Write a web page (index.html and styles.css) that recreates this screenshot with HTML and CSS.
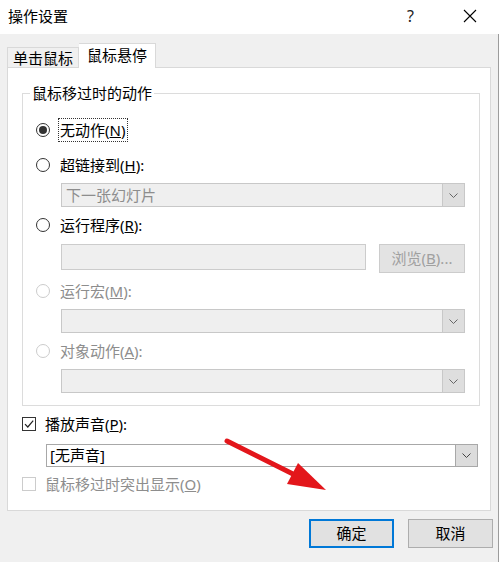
FILE: index.html
```html
<!DOCTYPE html>
<html lang="zh-CN">
<head>
    <meta charset="UTF-8">
    <title>操作设置</title>
    <link rel="stylesheet" href="styles.css">
</head>
<body>
    <div class="window">
        <div class="titlebar">
            <span class="title">操作设置</span>
            <span class="help">?</span>
            <svg class="close" width="14" height="14" viewBox="0 0 14 14"><path d="M1 1L13 13M13 1L1 13" stroke="#000" stroke-width="1.1"/></svg>
        </div>
        <div class="client">
            <div class="tabs">
                <div class="tab">单击鼠标</div>
                <div class="tab active">鼠标悬停</div>
            </div>
            <div class="panel">
                <fieldset class="group">
                    <legend>鼠标移过时的动作</legend>
                    <div class="opt first"><span class="radio checked"></span><span class="focus">无动作(<u>N</u>)</span></div>
                    <div class="opt"><span class="radio"></span><span>超链接到(<u>H</u>):</span></div>
                    <div class="combo sub off">
                        <span class="value">下一张幻灯片</span>
                        <span class="drop"><svg width="9" height="5" viewBox="0 0 9 5"><path d="M0.5 0.5L4.5 4.5L8.5 0.5" fill="none" stroke="#666"/></svg></span>
                    </div>
                    <div class="opt"><span class="radio"></span><span>运行程序(<u>R</u>):</span></div>
                    <div class="sub program">
                        <div class="field"></div>
                        <div class="browse">浏览(<u>B</u>)...</div>
                    </div>
                    <div class="opt off"><span class="radio"></span><span>运行宏(<u>M</u>):</span></div>
                    <div class="combo sub off">
                        <span class="value"></span>
                        <span class="drop"><svg width="9" height="5" viewBox="0 0 9 5"><path d="M0.5 0.5L4.5 4.5L8.5 0.5" fill="none" stroke="#666"/></svg></span>
                    </div>
                    <div class="opt off"><span class="radio"></span><span>对象动作(<u>A</u>):</span></div>
                    <div class="combo sub off">
                        <span class="value"></span>
                        <span class="drop"><svg width="9" height="5" viewBox="0 0 9 5"><path d="M0.5 0.5L4.5 4.5L8.5 0.5" fill="none" stroke="#666"/></svg></span>
                    </div>
                </fieldset>
                <div class="check-row"><span class="checkbox checked"><svg width="12" height="12" viewBox="0 0 12 12"><path d="M2 6.2L4.8 9L10.2 2.6" fill="none" stroke="#222" stroke-width="1.2"/></svg></span><span>播放声音(<u>P</u>):</span></div>
                <div class="combo sound">
                    <span class="value">[无声音]</span>
                    <span class="drop"><svg width="9" height="5" viewBox="0 0 9 5"><path d="M0.5 0.5L4.5 4.5L8.5 0.5" fill="none" stroke="#444"/></svg></span>
                </div>
                <div class="check-row off last"><span class="checkbox"></span><span>鼠标移过时突出显示(<u>O</u>)</span></div>
            </div>
            <div class="buttons">
                <div class="btn default">确定</div>
                <div class="btn">取消</div>
            </div>
        </div>
        <svg class="arrow" width="502" height="562" viewBox="0 0 502 562">
            <line x1="227" y1="441" x2="297" y2="476" stroke="#e3161b" stroke-width="5" stroke-linecap="round"/>
            <polygon points="326,490 287,484 298,463" fill="#e3161b"/>
        </svg>
    </div>
</body>
</html>
```

FILE: styles.css
```css
body {
    margin: 0;
    background: #ffffff;
    font-family: "Noto Sans", "Noto Sans CJK SC", sans-serif;
    font-size: 15px;
    color: #000000;
}
.window {
    width: 502px;
    height: 562px;
    position: relative;
    overflow: hidden;
}
.titlebar {
    height: 34px;
    display: flex;
    align-items: center;
    padding-left: 8px;
    background: #ffffff;
}
.title {
    flex: 1;
    line-height: 20px;
    margin-top: -2px;
}
.help {
    font-size: 16px;
    margin-right: 49px;
    margin-top: -2px;
    color: #222;
}
.close {
    margin-right: 25px;
    margin-top: -2px;
}
.client {
    height: 528px;
    margin-right: 3px;
    border-right: 1px solid #9c9c9c;
    background: #f0f0f0;
    padding: 10px 6px 0 7px;
    box-sizing: border-box;
}
.tabs {
    display: flex;
    align-items: flex-end;
    height: 23px;
}
.tab {
    height: 19px;
    width: 70px;
    border: 1px solid #d9d9d9;
    border-bottom: none;
    line-height: 20px;
    text-align: center;
    background: #f0f0f0;
}
.tab.active {
    width: 76px;
    height: 24px;
    background: #ffffff;
    border-left: none;
    margin-bottom: -1px;
    position: relative;
    line-height: 22px;
}
.panel {
    width: 484px;
    box-sizing: border-box;
    background: #ffffff;
    border: 1px solid #d9d9d9;
    padding: 15px 11px 14px 14px;
}
.group {
    margin: 0;
    border: 1px solid #dcdcdc;
    padding: 15px 14px 12px 13px;
    display: flex;
    flex-direction: column;
    gap: 6px;
}
.group legend {
    padding: 0 2px;
    margin-left: -6px;
    line-height: 20px;
}
.opt {
    height: 24px;
    display: flex;
    align-items: center;
    gap: 10px;
    line-height: 20px;
}
.opt.first {
    margin-bottom: 5px;
}
.opt.off, .check-row.off {
    color: #8d8d8d;
}
.radio {
    width: 14px;
    height: 14px;
    border: 1px solid #333333;
    border-radius: 50%;
    box-sizing: border-box;
    display: flex;
    align-items: center;
    justify-content: center;
    background: #ffffff;
}
.off .radio {
    border-color: #cccccc;
}
.radio.checked::after {
    content: "";
    width: 8px;
    height: 8px;
    border-radius: 50%;
    background: #333333;
}
.focus {
    outline: 1px dotted #333333;
    padding: 1px 2px 1px 1px;
    margin-left: -1px;
}
.sub {
    margin-left: 25px;
}
.combo {
    height: 24px;
    display: flex;
    border: 1px solid #c8c8c8;
    box-sizing: border-box;
    background: #efefef;
}
.combo .value {
    flex: 1;
    padding-left: 4px;
    line-height: 22px;
    color: #8d8d8d;
}
.combo .drop {
    width: 21px;
    background: #dedede;
    border-left: 1px solid #c8c8c8;
    display: flex;
    align-items: center;
    justify-content: center;
}
.program {
    display: flex;
    align-items: flex-start;
    gap: 13px;
    margin-top: 1px;
}
.field {
    width: 305px;
    height: 26px;
    box-sizing: border-box;
    border: 1px solid #cccccc;
    background: #efefef;
}
.browse {
    width: 86px;
    height: 29px;
    box-sizing: border-box;
    border: 1px solid #cccccc;
    background: #e3e3e3;
    color: #a0a0a0;
    text-align: center;
    line-height: 26px;
}
.check-row {
    height: 24px;
    margin-top: 6px;
    display: flex;
    align-items: center;
    gap: 9px;
    line-height: 20px;
}
.check-row.last {
    margin-top: 5px;
}
.checkbox {
    width: 14px;
    height: 14px;
    box-sizing: border-box;
    border: 1px solid #333333;
    display: flex;
    align-items: center;
    justify-content: center;
}
.off .checkbox {
    border-color: #cccccc;
}
.combo.sound {
    height: 23px;
    margin: 8px 1px 0 24px;
    background: #ffffff;
    border-color: #a8a8a8;
}
.combo.sound .value {
    color: #000000;
    padding-left: 3px;
    line-height: 21px;
}
.combo.sound .drop {
    background: #dcdcdc;
    border-left-color: #a8a8a8;
}
.buttons {
    display: flex;
    justify-content: flex-end;
    gap: 14px;
    margin-top: 8px;
    margin-right: -1px;
}
.btn {
    width: 85px;
    height: 29px;
    box-sizing: border-box;
    border: 1px solid #adadad;
    background: #e1e1e1;
    text-align: center;
    line-height: 27px;
}
.btn.default {
    border: 2px solid #0078d7;
    line-height: 25px;
}
.arrow {
    position: absolute;
    left: 0;
    top: 0;
    pointer-events: none;
}
```
